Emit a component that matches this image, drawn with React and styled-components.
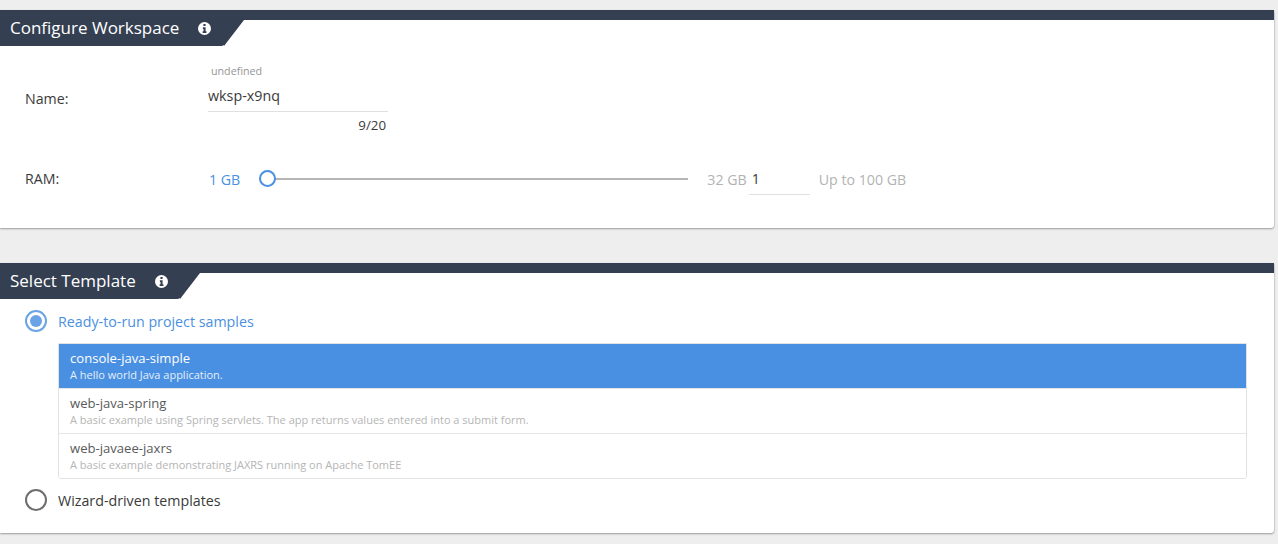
import React from "react";
import styled, { createGlobalStyle } from "styled-components";

const Global = createGlobalStyle`
  html, body { margin: 0; padding: 0; background: #eeeeee; height: 100%; overflow: hidden; }
  body { font-family: "Open Sans", "Liberation Sans", sans-serif; color: #353535; }
`;
const Page = styled.div`
  display: flex; flex-direction: column; gap: 35px;
  padding: 10px 4px 0 0; width: 1274px;
`;
const Panel = styled.section`
  background: #fff; height: ${(p) => p.$height}px; border-radius: 0 2px 3px 0;
  box-shadow: 0 1px 2px rgba(0,0,0,.35), 1px 0 1px rgba(0,0,0,.06);
  display: flex; flex-direction: column; box-sizing: border-box;
`;
const Header = styled.header`
  height: 36px; flex: none; border-top: 10px solid #353f52; box-sizing: border-box; display: flex;
`;
const Tab = styled.h2`
  margin: -10px 0 0; height: 36px; width: ${(p) => p.$width}px; box-sizing: border-box; padding-left: 10px;
  background: #353f52; color: #fff; font-size: 17px; font-weight: 400; line-height: 36px;
  display: flex; align-items: center; border-radius: 0 0 4px 0; position: relative; white-space: nowrap;
  &::after {
    content: ""; position: absolute; left: 100%; top: 10px; width: 20px; height: 26px; margin-left: -1px;
    background: #353f52; clip-path: polygon(0 0, 100% 0, 0 100%);
  }
`;
const Info = styled.svg`
  width: 13px; height: 13px; margin-left: ${(p) => p.$gap}px; flex: none; fill: #fff;
`;
const Body1 = styled.div`
  padding-left: 25px; display: flex; flex-direction: column;
`;
const NameRow = styled.div`
  display: grid; grid-template-columns: 183px 180px; height: 116px;
`;
const Label = styled.div`
  font-size: 14.2px; line-height: 18px; color: #3a3a3a;
`;
const NameLabel = styled(Label)`
  margin-top: 44px;
`;
const Field = styled.div`
  display: flex; flex-direction: column; padding-top: 19px;
`;
const Hint = styled.div`
  font-size: 10.7px; line-height: 12px; color: #969696; padding-left: 3px;
`;
const NameValue = styled.div`
  font-size: 14.3px; line-height: 20px; padding: 9px 0 5px; border-bottom: 1px solid #e0e0e0; color: #3a3a3a;
`;
const Counter = styled.div`
  font-size: 13.3px; line-height: 16px; text-align: right; padding: 5px 2px 0 0; color: #3a3a3a;
`;
const RamRow = styled.div`
  display: flex; align-items: center; height: 34px;
`;
const RamLabel = styled(Label)`
  width: 184px; flex: none;
`;
const Value = styled.span`
  font-size: 14.2px; color: ${(p) => p.$blue ? "#4a90e2" : "#b3b3b3"}; white-space: nowrap;
`;
const Slider = styled.div`
  width: 429px; margin: 0 19px; height: 2px; background: #b5b5b5; position: relative; flex: none;
`;
const Thumb = styled.span`
  position: absolute; left: 0; top: -8px; width: 17px; height: 17px; box-sizing: border-box; border-radius: 50%;
  background: #fff; border: 2px solid #4a90e2;
`;
const RamInput = styled.div`
  width: 61px; height: 33px; margin: 0 9px 0 2px; padding: 8px 0 0 3px; box-sizing: border-box; flex: none;
  font-size: 14.2px; line-height: 18px; color: #3a3a3a; border-bottom: 1px solid #e0e0e0; align-self: flex-start;
`;
const Body2 = styled.div`
  padding: 0 27px 0 25px; display: flex; flex-direction: column;
`;
const RadioRow = styled.div`
  display: flex; align-items: center; gap: 11px; height: 26px; margin-top: ${(p) => p.$top}px;
  font-size: 14.25px; color: ${(p) => p.$active ? "#4a90e2" : "#3a3a3a"};
`;
const Radio = styled.span`
  width: 22px; height: 22px; box-sizing: border-box; border-radius: 50%; flex: none; display: flex; align-items: center; justify-content: center;
  border: 2px solid ${(p) => p.$active ? "#6aa3e6" : "#6e6e6e"};
  &::after { content: ""; display: ${(p) => p.$active ? "block" : "none"}; width: 12px; height: 12px; border-radius: 50%; background: #6aa3e6; }
`;
const List = styled.div`
  margin: 9px 0 8px 33px; border: 1px solid #e2e2e2; border-radius: 0 0 3px 3px; display: flex; flex-direction: column; overflow: hidden;
`;
const Item = styled.div`
  height: 45px; box-sizing: border-box; padding: 5px 11px 0; background: ${(p) => p.$selected ? "#4a90e2" : "#fff"};
  &:first-child { height: 44px; }
  & + & { border-top: 1px solid #e6e6e6; }
`;
const ItemTitle = styled.div`
  font-size: 13.1px; line-height: 18px; color: ${(p) => p.$selected ? "#fff" : "#5a5a5a"};
`;
const ItemDesc = styled.div`
  font-size: 11px; line-height: 15px; color: ${(p) => p.$selected ? "#e3eefb" : "#b5b5b5"};
`;

const InfoIcon = ({ gap }) => (
  <Info $gap={gap} viewBox="0 0 24 24" aria-hidden="true">
    <path fillRule="evenodd" d="M12 0a12 12 0 1 0 0 24 12 12 0 0 0 0-24Zm-2 3.8h4v3.7h-4V3.8Zm-1 6h5v7.4h1.6v3H8.6v-3h1.6v-4.4H9v-3Z" />
  </Info>
);

const templates = [
  { t: "console-java-simple", d: "A hello world Java application.", s: true },
  { t: "web-java-spring", d: "A basic example using Spring servlets. The app returns values entered into a submit form." },
  { t: "web-javaee-jaxrs", d: "A basic example demonstrating JAXRS running on Apache TomEE" },
];

export default function App() {
  return (
    <>
      <Global />
      <Page>
        <Panel $height={218}>
          <Header>
            <Tab $width={225}>Configure Workspace<InfoIcon gap={19} /></Tab>
          </Header>
          <Body1>
            <NameRow>
              <NameLabel>Name:</NameLabel>
              <Field>
                <Hint>undefined</Hint>
                <NameValue>wksp-x9nq</NameValue>
                <Counter>9/20</Counter>
              </Field>
            </NameRow>
            <RamRow>
              <RamLabel>RAM:</RamLabel>
              <Value $blue>1 GB</Value>
              <Slider><Thumb /></Slider>
              <Value>32 GB</Value>
              <RamInput>1</RamInput>
              <Value>Up to 100 GB</Value>
            </RamRow>
          </Body1>
        </Panel>
        <Panel $height={270}>
          <Header>
            <Tab $width={181}>Select Template<InfoIcon gap={19} /></Tab>
          </Header>
          <Body2>
            <RadioRow $active $top={9}><Radio $active />Ready-to-run project samples</RadioRow>
            <List>
              {templates.map((x) => (
                <Item key={x.t} $selected={x.s}>
                  <ItemTitle $selected={x.s}>{x.t}</ItemTitle>
                  <ItemDesc $selected={x.s}>{x.d}</ItemDesc>
                </Item>
              ))}
            </List>
            <RadioRow>
              <Radio />Wizard-driven templates
            </RadioRow>
          </Body2>
        </Panel>
      </Page>
    </>
  );
}
